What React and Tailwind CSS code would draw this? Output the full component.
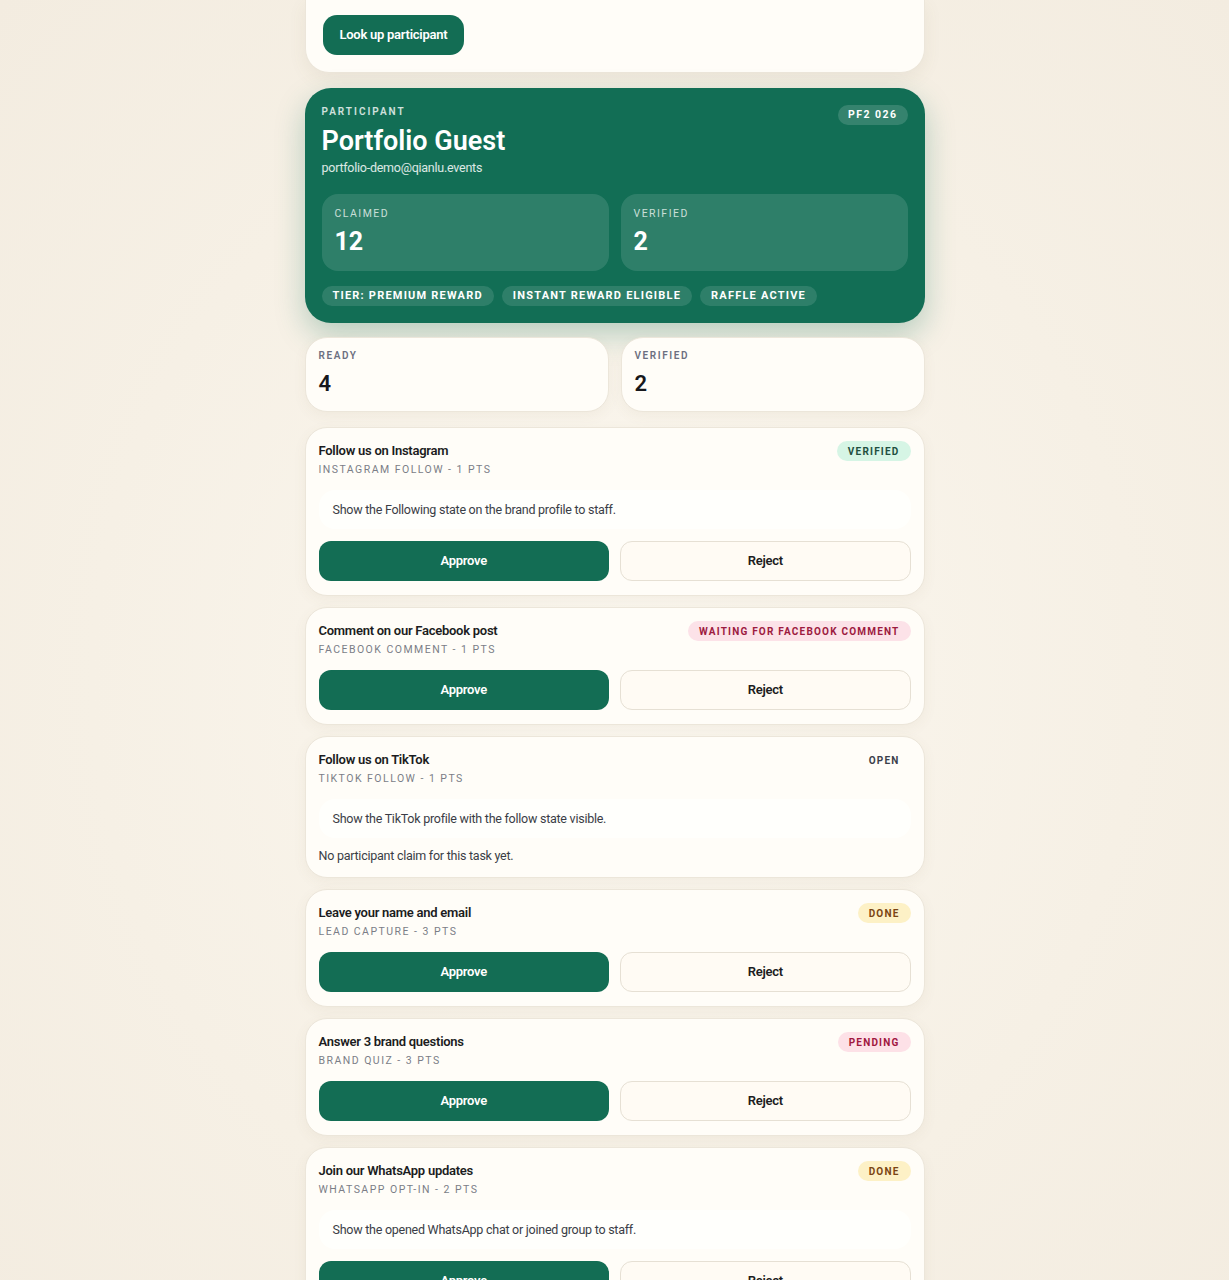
import React from "react";

const tasks = [
  {
    title: "Follow us on Instagram",
    meta: "Instagram follow - 1 pts",
    status: "Verified",
    tone: "verified",
    note: "Show the Following state on the brand profile to staff.",
    actions: true,
  },
  {
    title: "Comment on our Facebook post",
    meta: "Facebook comment - 1 pts",
    status: "Waiting for Facebook comment",
    tone: "waiting",
    actions: true,
  },
  {
    title: "Follow us on TikTok",
    meta: "TikTok follow - 1 pts",
    status: "Open",
    tone: "open",
    note: "Show the TikTok profile with the follow state visible.",
    empty: "No participant claim for this task yet.",
  },
  {
    title: "Leave your name and email",
    meta: "Lead capture - 3 pts",
    status: "Done",
    tone: "done",
    actions: true,
  },
  {
    title: "Answer 3 brand questions",
    meta: "Brand quiz - 3 pts",
    status: "Pending",
    tone: "pending",
    actions: true,
  },
  {
    title: "Join our WhatsApp updates",
    meta: "WhatsApp opt-in - 2 pts",
    status: "Done",
    tone: "done",
    note: "Show the opened WhatsApp chat or joined group to staff.",
    actions: true,
  },
];

const badgeTone = {
  verified: "bg-[#d6f5e5] text-[#1f4f3f]",
  waiting: "bg-[#fce2e8] text-[#9c1b40]",
  done: "bg-[#fdf1c6] text-[#7b4512]",
  pending: "bg-[#fde1e7] text-[#a1173f]",
  open: "bg-transparent text-[#3b3f4a]",
};

const StatusBadge = ({ label, tone }) => (
  <span
    className={`inline-flex h-[20px] items-center rounded-full px-[11px] text-[10px] font-bold uppercase tracking-[0.12em] ${badgeTone[tone]}`}
  >
    {label}
  </span>
);

const TaskCard = ({ task }) => (
  <div className="rounded-[22px] border border-[#ece6da] bg-[#fffdf8] px-[13px] pb-[14px] pt-[13px] shadow-[0_4px_14px_rgba(120,100,60,0.06)]">
    <div className="flex items-start justify-between">
      <div>
        <p className="text-[13px] font-semibold leading-5 tracking-[-0.02em] text-[#1b1c21]">
          {task.title}
        </p>
        <p className="mt-[1px] text-[10.5px] uppercase leading-4 tracking-[0.14em] text-[#7b7d87]">
          {task.meta}
        </p>
      </div>
      <StatusBadge label={task.status} tone={task.tone} />
    </div>

    <div className="mt-3 flex flex-col gap-3">
      {task.note && (
        <div className="rounded-2xl bg-[#fffffc] px-[14px] pb-[9px] pt-[10px] text-[12.5px] leading-5 tracking-[-0.02em] text-[#3a3d46]">
          {task.note}
        </div>
      )}
      {task.empty && (
        <p className="-mb-[3px] -mt-1 text-[12.5px] leading-5 tracking-[-0.02em] text-[#3a3d46]">
          {task.empty}
        </p>
      )}
      {task.actions && (
        <div className="grid grid-cols-2 gap-[11px]">
          <button className="h-[40px] rounded-xl bg-[#136d54] text-[13px] font-semibold tracking-[-0.02em] text-white">
            Approve
          </button>
          <button className="h-[40px] rounded-xl border border-[#e6e0d4] bg-[#fffbf4] text-[13px] font-semibold tracking-[-0.02em] text-[#1b1c21]">
            Reject
          </button>
        </div>
      )}
    </div>
  </div>
);

const StatCard = ({ label, value }) => (
  <div className="rounded-[22px] border border-[#ece6da] bg-[#fffdf8] px-[13px] pb-[15px] pt-[10px] shadow-[0_4px_14px_rgba(120,100,60,0.06)]">
    <p className="text-[10px] font-semibold uppercase leading-4 tracking-[0.16em] text-[#6c6f80]">
      {label}
    </p>
    <p className="mt-[8px] text-[22px] font-semibold leading-6 text-[#17181c]">{value}</p>
  </div>
);

export default function App() {
  return (
    <div
      className="min-h-screen bg-[radial-gradient(ellipse_at_center,#fbf7ef_0%,#f6f0e5_60%,#f3ece0_100%)] pb-10"
      style={{ fontFamily: "Roboto, 'Noto Sans', sans-serif" }}
    >
      <div className="mx-auto flex w-[620px] flex-col">
        {/* Lookup card (top clipped) */}
        <div className="rounded-b-[24px] border border-t-0 border-[#ece6da] bg-[#fffdf8] px-[17px] pb-[17px] pt-[15px] shadow-[0_6px_18px_rgba(120,100,60,0.08)]">
          <button className="h-[40px] rounded-[14px] bg-[#136d54] px-[17px] text-[13px] font-semibold tracking-[-0.02em] text-white">
            Look up participant
          </button>
        </div>

        {/* Participant card */}
        <div className="mt-[15px] rounded-[26px] bg-[#126e55] px-[17px] pb-[17px] pt-[16px] text-white shadow-[0_12px_30px_rgba(18,110,85,0.28)]">
          <div className="flex items-start justify-between">
            <div>
              <p className="text-[10px] font-semibold uppercase leading-4 tracking-[0.2em] text-white/80">
                Participant
              </p>
              <h1 className="mt-[5px] text-[27px] font-semibold leading-8">Portfolio Guest</h1>
              <p className="mt-[1px] text-[12.5px] leading-5 tracking-[-0.02em] text-white/85">
                portfolio-demo@qianlu.events
              </p>
            </div>
            <span className="mt-[1px] inline-flex h-[20px] items-center rounded-full bg-white/15 px-[10px] text-[10.5px] font-bold tracking-[0.14em]">
              PF2 026
            </span>
          </div>

          <div className="mt-[16px] grid grid-cols-2 gap-[12px]">
            {[
              ["Claimed", "12"],
              ["Verified", "2"],
            ].map(([label, value]) => (
              <div key={label} className="h-[77px] rounded-2xl bg-white/12 px-[13px] pt-[12px]">
                <p className="text-[10.5px] uppercase leading-4 tracking-[0.14em] text-white/75">
                  {label}
                </p>
                <p className="mt-[6px] text-[25px] font-bold leading-7">{value}</p>
              </div>
            ))}
          </div>

          <div className="mt-[15px] flex gap-[8px]">
            {["Tier: Premium reward", "Instant reward eligible", "Raffle active"].map((chip) => (
              <span
                key={chip}
                className="inline-flex h-[20px] items-center rounded-full bg-white/12 px-[11px] text-[11px] font-bold uppercase tracking-[0.11em]"
              >
                {chip}
              </span>
            ))}
          </div>
        </div>

        {/* Summary */}
        <div className="mt-[14px] grid grid-cols-2 gap-[12px]">
          <StatCard label="Ready" value="4" />
          <StatCard label="Verified" value="2" />
        </div>

        {/* Tasks */}
        <div className="mt-[15px] flex flex-col gap-[11px]">
          {tasks.map((task) => (
            <TaskCard key={task.title} task={task} />
          ))}
        </div>
      </div>
    </div>
  );
}
